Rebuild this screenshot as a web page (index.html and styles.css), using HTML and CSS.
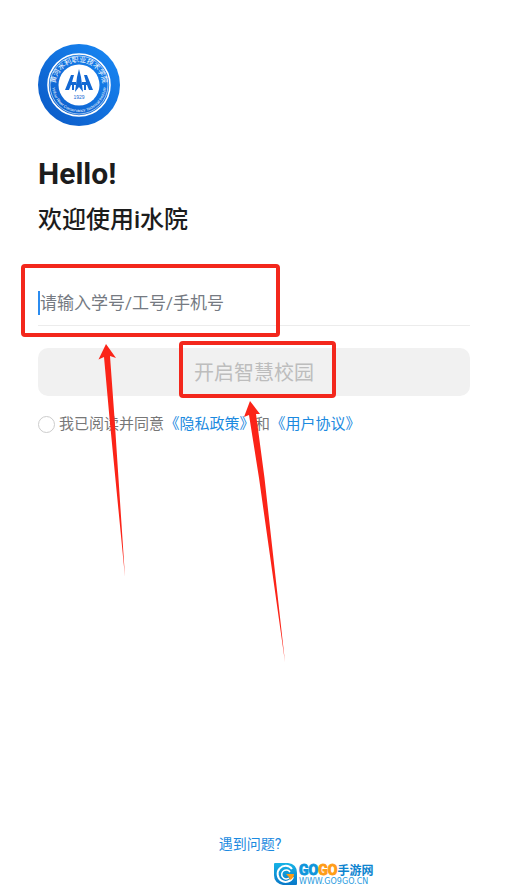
FILE: index.html
```html
<!DOCTYPE html>
<html lang="zh-CN">
<head>
    <meta charset="UTF-8">
    <meta name="viewport" content="width=device-width, initial-scale=1.0">
    <title>i水院</title>
    <link rel="stylesheet" href="styles.css">
</head>
<body>
    <main class="page">
        <svg class="logo" viewBox="0 0 82 82" role="img" aria-label="黄河水利职业技术学院">
            <defs>
                <linearGradient id="logoBg" x1="0" y1="1" x2="1" y2="0">
                    <stop offset="0" stop-color="#0b58c4"/>
                    <stop offset="1" stop-color="#1889f6"/>
                </linearGradient>
                <path id="arcTop" d="M20 52 A23.500 23.500 0 1 1 62 52"/>
                <path id="arcBottom" d="M14 41 A27 27 0 0 0 68 41"/>
            </defs>
            <circle cx="41" cy="41" r="41" fill="url(#logoBg)"/>
            <circle cx="41" cy="41" r="31" fill="none" stroke="#fff" stroke-width="1.600"/>
            <circle cx="41" cy="41" r="29" fill="none" stroke="#fff" stroke-width="0.600"/>
            <circle cx="41" cy="41" r="20.500" fill="#fff"/>
            <text class="seal-cn"><textPath href="#arcTop" startOffset="50%" text-anchor="middle">黄河水利职业技术学院</textPath></text>
            <text class="seal-en"><textPath href="#arcBottom" startOffset="50%" text-anchor="middle">Yellow River Conservancy Technical Institute</textPath></text>
            <g fill="#1268d3">
                <path d="M41 25 L43 33 L45 48 L41 43 L37 48 L39 33 Z"/>
                <path d="M33 31 L36 31 L34 38 H38 V41 H36 V46 H34 V41 H33 L31 46 H27 Z"/>
                <path d="M49 31 L46 31 L48 38 H44 V41 H46 V46 H48 V41 H49 L51 46 H55 Z"/>
            </g>
            <text class="seal-year" x="41" y="55" text-anchor="middle">1929</text>
        </svg>

        <h1>Hello!</h1>
        <h2>欢迎使用i水院</h2>

        <form class="login-form">
            <div class="field">
                <span class="caret"></span>
                <input type="text" id="account" aria-label="账号" placeholder="请输入学号/工号/手机号">
            </div>
            <button type="submit" class="btn" disabled>开启智慧校园</button>
            <div class="agreement">
                <input type="radio" id="agree">
                <label for="agree">我已阅读并同意</label><a href="#privacy">《隐私政策》</a><span>和</span><a href="#terms">《用户协议》</a>
            </div>
        </form>

        <a class="help" href="#help">遇到问题?</a>
    </main>

    <!-- red boxes and arrows over the form -->
    <svg class="marks" width="300" height="670" viewBox="0 0 300 670" aria-hidden="true">
        <path d="M106 344 L116 358 L110 356 L114.500 418 L125 577 L109.500 418 L104 357 L98.500 359.500 Z"/>
        <path d="M250 401 L260 414 L256 414 L264.500 478 L285 662 L259 478 L249 415 L244 417 Z"/>
    </svg>
    <div class="mark-box mark-input"></div>
    <div class="mark-box mark-button"></div>

    <div class="watermark">
        <svg width="23" height="22" viewBox="0 0 23 22" aria-hidden="true">
            <defs>
                <linearGradient id="wmBg" x1="0" y1="0" x2="0" y2="1">
                    <stop offset="0" stop-color="#16b3e6"/>
                    <stop offset="1" stop-color="#0878c8"/>
                </linearGradient>
            </defs>
            <path d="M1 0 H14 Q23 1 23 10 V21 Q23 22 22 22 H9 Q0 20 0 12 V1 Q0 0 1 0 Z" fill="url(#wmBg)"/>
            <path d="M18 6 A8 8 0 1 0 19 14" fill="none" stroke="#fff" stroke-width="2"/>
            <path d="M16 9 A4.500 4.500 0 1 0 15 15" fill="none" stroke="#fff" stroke-width="1.500"/>
            <path d="M12 11 H20 Q20 15 16 17 L15 14 Z" fill="#ff9d16"/>
        </svg>
        <div>
            <div class="wm-name"><b class="wm-blue">GO</b><b class="wm-orange">GO</b><b class="wm-cn">手游网</b></div>
            <div class="wm-url">WWW.GO9GO.CN</div>
        </div>
    </div>
</body>
</html>
```

FILE: styles.css
```css
* {
    margin: 0;
    padding: 0;
    box-sizing: border-box;
}

body {
    position: relative;
    min-height: 100vh;
    background: #fff;
    color: #1c1c1c;
    font-family: Roboto, 'Noto Sans CJK SC', sans-serif;
}

a {
    color: #1b8ae0;
    text-decoration: none;
}

.page {
    display: flex;
    flex-direction: column;
    min-height: 100vh;
    padding: 44px 41px 40px 38px;
}

/* school seal */
.logo {
    width: 82px;
    height: 82px;
}

.seal-cn {
    fill: #fff;
    font-family: 'Noto Sans CJK SC', sans-serif;
    font-size: 7px;
}

.seal-en {
    fill: #fff;
    font-family: 'Liberation Sans', sans-serif;
    font-size: 4px;
}

.seal-year {
    fill: #1268d3;
    font-family: 'Liberation Sans', sans-serif;
    font-size: 5px;
}

h1 {
    margin-top: 28px;
    font-size: 30px;
    line-height: 40px;
}

h2 {
    margin-top: 8px;
    font-size: 24px;
    font-weight: 500;
    line-height: 36px;
}

.login-form {
    margin-top: 42px;
}

.field {
    display: flex;
    align-items: center;
    height: 46px;
    border-bottom: 1px solid #ececec;
}

.caret {
    width: 2px;
    height: 24px;
    background: #2b8cf0;
}

.field input {
    flex: 1;
    min-width: 0;
    border: none;
    outline: none;
    background: none;
    font-family: inherit;
    font-size: 17px;
    line-height: 24px;
}

.field input::placeholder {
    color: #757a82;
}

.btn {
    display: block;
    width: 100%;
    height: 48px;
    margin-top: 22px;
    border: none;
    border-radius: 10px;
    background: #f1f1f1;
    color: #bdbdbd;
    font-family: 'Noto Sans CJK SC', sans-serif;
    font-size: 20px;
    line-height: 24px;
}

.agreement {
    display: flex;
    align-items: center;
    margin-top: 16px;
    color: #777;
    font-size: 15px;
    line-height: 24px;
}

.agreement input {
    appearance: none;
    width: 17px;
    height: 17px;
    margin-right: 4px;
    border: 1px solid #ccc;
    border-radius: 50%;
}

/* half-width book title marks */
.agreement a {
    margin: 0 8px;
    font-feature-settings: 'halt';
}

.help {
    align-self: center;
    margin-top: auto;
    padding-right: 8px;
    font-size: 14px;
    line-height: 24px;
}

/* annotations */
.marks {
    position: absolute;
    top: 0;
    left: 0;
    fill: #fb2418;
    pointer-events: none;
}

.mark-box {
    position: absolute;
    border: 4px solid #f3271c;
    border-radius: 4px;
    pointer-events: none;
}

.mark-input {
    top: 264px;
    left: 21px;
    width: 259px;
    height: 73px;
}

.mark-button {
    top: 341px;
    left: 179px;
    width: 157px;
    height: 57px;
}

.watermark {
    position: absolute;
    bottom: 10px;
    left: 274px;
    display: flex;
    align-items: center;
    gap: 2px;
}

.wm-name {
    display: flex;
    align-items: center;
    height: 16px;
    font-family: 'Liberation Sans Narrow', Roboto, sans-serif;
    font-size: 14px;
    line-height: 16px;
}

.wm-blue {
    color: #0f96dc;
    -webkit-text-stroke: 1px #0f96dc;
}

.wm-orange {
    color: #ff9d16;
    -webkit-text-stroke: 1px #ff9d16;
}

.wm-cn {
    color: #0d84cf;
    font-family: 'Noto Sans CJK SC', sans-serif;
    font-size: 12px;
}

.wm-url {
    color: #2a9be0;
    font-family: 'DejaVu Sans', sans-serif;
    font-size: 8px;
    line-height: 8px;
}
```
